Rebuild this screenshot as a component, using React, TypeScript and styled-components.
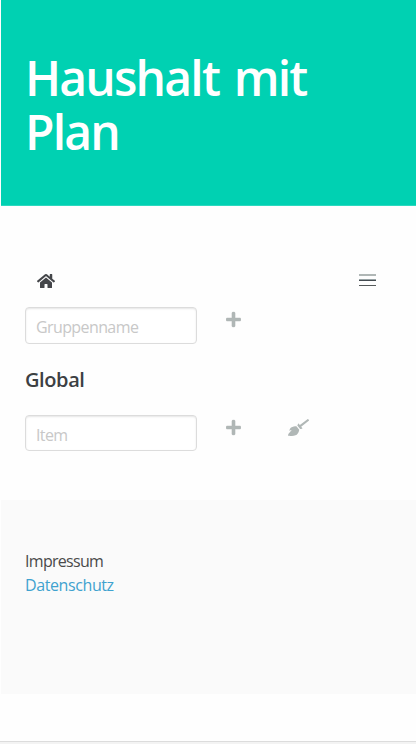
import React from 'react';
import styled, { createGlobalStyle } from 'styled-components';
import { FaHome, FaPlus, FaBroom } from 'react-icons/fa';

const GlobalStyle = createGlobalStyle`
  *, *::before, *::after { box-sizing: border-box; }
  html, body { margin: 0; padding: 0; background: #fefefe; }
  body { overflow: hidden; }
`;

const Page = styled.div`
  display: flex;
  flex-direction: column;
  height: 744px;
  color: #4a4a4a;
  font: 400 16px/24px "Segoe UI", "Open Sans", "Noto Sans", sans-serif;
`;

const Content = styled.div`
  flex: 1;
  padding-left: 1px;
`;

const Hero = styled.header`
  height: 206px;
  padding: 51px 24px 0 24px;
  background: #00d1b2;
  border-bottom: 1px solid #2cd9bf;
`;

const Title = styled.h1`
  margin: 0;
  width: 300px;
  color: #fff;
  font-size: 48px;
  font-weight: 600;
  line-height: 54px;
  letter-spacing: -1.8px;
  word-spacing: 4px;
`;

const Main = styled.main`
  height: 294px;
  padding: 49px 24px 0;
`;

const NavBar = styled.nav`
  display: flex;
  align-items: center;
  justify-content: space-between;
  height: 52px;
  padding: 0 16px 0 11.5px;
`;

const HomeIcon = styled(FaHome)`
  width: 18px;
  height: 16px;
  color: #44464a;
`;

const Burger = styled.div`
  display: flex;
  flex-direction: column;
  width: 17px;
  height: 16px;
`;

const BurgerLine = styled.span<{ $height: number; $gap: number; $color: string; $under?: string }>`
  height: ${p => p.$height}px;
  margin-top: ${p => p.$gap}px;
  background: ${p => p.$color};
  border-bottom: ${p => (p.$under ? `1px solid ${p.$under}` : '0')};
`;

const Row = styled.div`
  display: flex;
  align-items: flex-start;
`;

const Field = styled.input<{ $height: number }>`
  width: 172px;
  height: ${p => p.$height}px;
  padding: 3px 9px 0 10px;
  border: 1px solid #dcdcdc;
  border-radius: 4px;
  outline: none;
  background: #fff;
  box-shadow: inset 0 1px 2px rgba(10, 10, 10, 0.1);
  color: #363636;
  font: inherit;
  letter-spacing: -0.6px;
  &::placeholder { color: #c8c8c8; opacity: 1; }
`;

const IconButton = styled.button<{ $gap: number; $width: number }>`
  display: flex;
  align-items: center;
  justify-content: center;
  width: ${p => p.$width}px;
  height: 24px;
  margin: 0 0 0 ${p => p.$gap}px;
  padding: 0;
  border: 0;
  background: none;
  color: #b0b7b6;
  svg { flex: none; width: ${p => p.$width}px; height: 17px; }
`;

const PlusIcon = styled(FaPlus)`
  stroke: currentColor;
  stroke-width: 12px;
`;

const GroupName = styled.h2`
  margin: 24px 0 23px;
  color: #3c4043;
  font-size: 20px;
  font-weight: 600;
  line-height: 24px;
  letter-spacing: -0.4px;
`;

const Footer = styled.footer`
  display: flex;
  flex-direction: column;
  align-items: flex-start;
  height: 194px;
  padding: 49px 24px 0;
  background: #fafafa;
`;

const FooterLink = styled.a<{ $accent?: boolean }>`
  color: ${p => (p.$accent ? '#3fa2cf' : '#4a4a4a')};
  letter-spacing: ${p => (p.$accent ? '-0.4px' : '-0.7px')};
  text-decoration: none;
`;

const BottomEdge = styled.div`
  height: 3px;
  border-top: 1px solid #dcdcdc;
  background: #f3f3f3;
`;

export default function App() {
  return (
    <Page>
      <GlobalStyle />
      <Content>
        <Hero>
          <Title>Haushalt mit Plan</Title>
        </Hero>
        <Main>
          <NavBar>
            <HomeIcon />
            <Burger>
              <BurgerLine $height={2} $gap={1} $color="#b0b7b6" />
              <BurgerLine $height={2} $gap={3} $color="#98a3a5" $under="#444b50" />
              <BurgerLine $height={1} $gap={4} $color="#55595a" />
            </Burger>
          </NavBar>
          <Row>
            <Field $height={37} placeholder="Gruppenname" />
            <IconButton $gap={29} $width={15} aria-label="Gruppe anlegen"><PlusIcon /></IconButton>
          </Row>
          <GroupName>Global</GroupName>
          <Row>
            <Field $height={36} placeholder="Item" />
            <IconButton $gap={29} $width={15} aria-label="Item anlegen"><PlusIcon /></IconButton>
            <IconButton $gap={47} $width={21} aria-label="Aufräumen"><FaBroom /></IconButton>
          </Row>
        </Main>
        <Footer>
          <FooterLink>Impressum</FooterLink>
          <FooterLink $accent>Datenschutz</FooterLink>
        </Footer>
      </Content>
      <BottomEdge />
    </Page>
  );
}
